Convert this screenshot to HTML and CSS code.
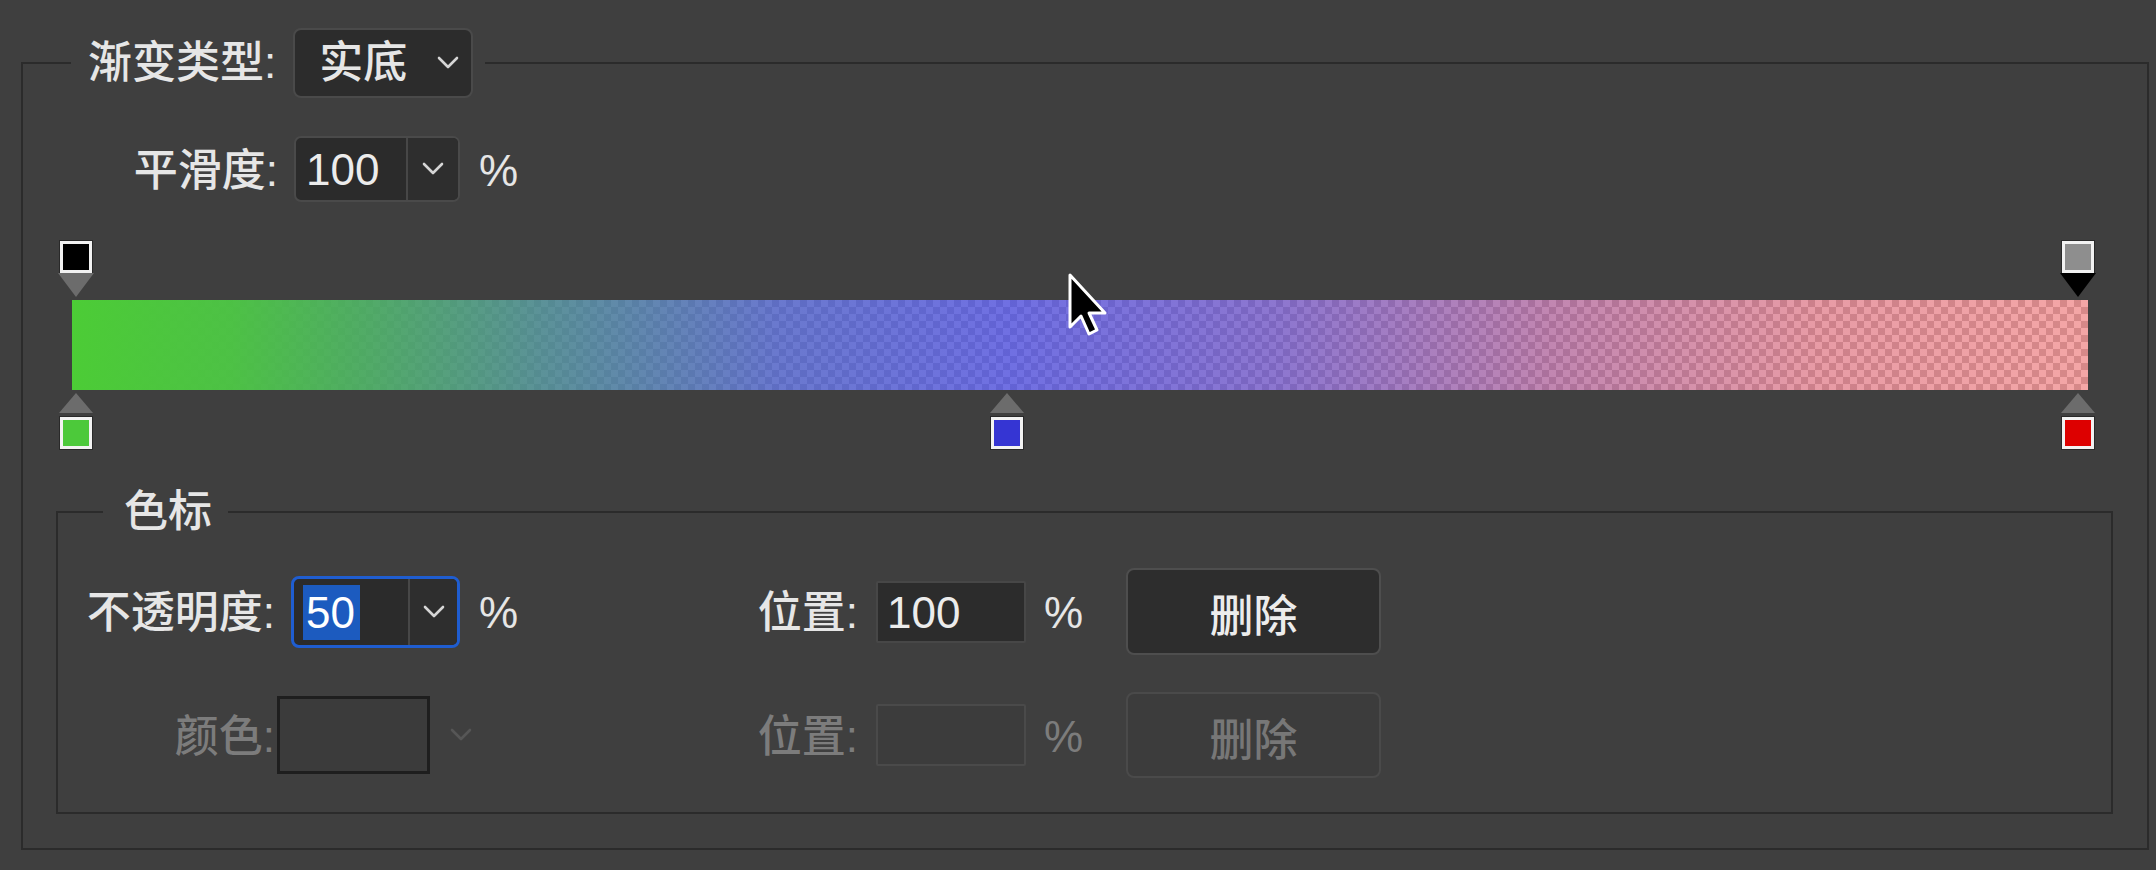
FILE: index.html
```html
<!DOCTYPE html>
<html lang="zh-CN">
<head>
<meta charset="utf-8">
<title>渐变编辑器</title>
<link rel="stylesheet" href="styles.css">
</head>
<body>
<main class="editor">
  <fieldset class="outer">
    <legend class="outer-legend">
      <div class="legend-inner">
        <span class="lbl-inline">渐变类型:</span>
        <span class="select">
          <span class="select-text">实底</span>
          <svg class="chev chev-select" viewBox="0 0 22 14" width="22" height="14"><path d="M2 2 L11 11 L20 2"/></svg>
        </span>
      </div>
    </legend>

    <div class="smooth-row">
      <span class="lbl lbl-smooth">平滑度:</span>
      <span class="combo">
        <span class="combo-text">100</span>
        <span class="combo-btn"><svg class="chev" viewBox="0 0 22 14" width="22" height="14"><path d="M2 2 L11 11 L20 2"/></svg></span>
      </span>
      <span class="pct">%</span>
    </div>

    <div class="grad">
      <div class="track track-top">
        <span class="stop stop-top" style="left:0%"><span class="sw" style="background:#000000"></span><span class="tri-down"></span></span>
        <span class="stop stop-top selected" style="left:100%"><span class="sw" style="background:#8e8e8e"></span><span class="tri-down"></span></span>
      </div>
      <div class="bar"></div>
      <div class="track track-bottom">
        <span class="stop stop-bottom" style="left:0%"><span class="tri-up"></span><span class="sw" style="background:#4cc93a"></span></span>
        <span class="stop stop-bottom" style="left:46.5%"><span class="tri-up"></span><span class="sw" style="background:#3535d3"></span></span>
        <span class="stop stop-bottom" style="left:100%"><span class="tri-up"></span><span class="sw" style="background:#dd0000"></span></span>
      </div>
    </div>

    <fieldset class="inner">
      <legend class="inner-legend">色标</legend>

      <div class="row row1">
        <div class="group-a">
          <span class="lbl lbl-a">不透明度:</span>
          <span class="combo combo-focus">
            <span class="combo-text"><span class="sel">50</span></span>
            <span class="combo-btn"><svg class="chev" viewBox="0 0 22 14" width="22" height="14"><path d="M2 2 L11 11 L20 2"/></svg></span>
          </span>
          <span class="pct">%</span>
        </div>
        <div class="group-b">
          <span class="lbl lbl-b">位置:</span>
          <span class="field">100</span>
          <span class="pct pct-b">%</span>
          <span class="btn">删除</span>
        </div>
      </div>

      <div class="row row2 disabled">
        <div class="group-a">
          <span class="lbl lbl-a">颜色:</span>
          <span class="swatch"></span>
          <svg class="chev chev-dis" viewBox="0 0 22 14" width="22" height="14"><path d="M2 2 L11 11 L20 2"/></svg>
        </div>
        <div class="group-b">
          <span class="lbl lbl-b">位置:</span>
          <span class="field"></span>
          <span class="pct pct-b">%</span>
          <span class="btn">删除</span>
        </div>
      </div>
    </fieldset>
  </fieldset>

  <svg class="cursor" viewBox="0 0 44 68" width="44" height="68"><polygon points="4,4 4,56 15,45 23,63 31,59 23,42 39,42" /></svg>
</main>
</body>
</html>
```

FILE: styles.css
```css
* { box-sizing: border-box; }

html, body {
  margin: 0;
  padding: 0;
}

body {
  background: #3f3f3f;
  width: 2156px;
  height: 870px;
  overflow: hidden;
  font-family: "Liberation Sans", "Noto Sans CJK SC", sans-serif;
  font-size: 44px;
  font-weight: 500;
  color: #e6e6e6;
}

.editor {
  position: relative;
  padding: 28px 0 0 21px;
  height: 870px;
}

fieldset {
  margin: 0;
  min-width: 0;
}

legend {
  line-height: 50px;
}

.outer {
  width: 2128px;
  border: 2px solid #2b2b2b;
  padding: 0 0 34px 0;
}

.outer-legend {
  margin-left: 48px;
  padding: 0 12px 0 17px;
}

.legend-inner {
  display: flex;
  align-items: center;
  height: 70px;
}

.lbl-inline {
  line-height: 50px;
}

.select {
  margin-left: 17px;
  width: 180px;
  height: 70px;
  display: flex;
  align-items: center;
  background: #2c2c2c;
  border: 2px solid #4a4a4a;
  border-radius: 8px;
  padding-left: 24px;
}

.select-text {
  line-height: 50px;
}

.chev {
  display: block;
  fill: none;
  stroke: #d6d6d6;
  stroke-width: 2.6;
  stroke-linecap: round;
  stroke-linejoin: round;
}

.chev-select {
  margin-left: 30px;
}

.smooth-row {
  display: flex;
  align-items: center;
  height: 66px;
  margin-top: 38px;
}

.lbl {
  flex: none;
  text-align: right;
  line-height: 50px;
  padding-top: 3px;
}

.lbl-smooth {
  width: 255px;
  margin-right: 16px;
}

.combo {
  flex: none;
  display: flex;
  width: 166px;
  height: 66px;
  border: 2px solid #4a4a4a;
  border-radius: 7px;
  background: #2b2b2b;
  overflow: hidden;
}

.combo-text {
  flex: 1;
  display: flex;
  align-items: center;
  padding-left: 10px;
  padding-top: 2px;
  line-height: 50px;
  color: #ececec;
}

.combo-btn {
  width: 52px;
  border-left: 2px solid #474747;
  background: #2e2e2e;
  display: flex;
  align-items: center;
  justify-content: center;
}

.pct {
  flex: none;
  margin-left: 19px;
  width: 37px;
  line-height: 50px;
  padding-top: 3px;
}

/* gradient editor */
.grad {
  margin-top: 39px;
}

.track {
  position: relative;
  margin: 0 69px 0 53px;
}

.track-top {
  height: 59px;
}

.track-bottom {
  height: 60px;
}

.stop {
  position: absolute;
  top: 0;
  width: 36px;
  transform: translateX(-50%);
  display: flex;
  flex-direction: column;
  align-items: center;
}

.sw {
  display: block;
  width: 32px;
  height: 32px;
  border: 3px solid #f2f2f2;
  box-shadow: 0 0 0 1px rgba(0, 0, 0, 0.35);
}

.tri-down {
  display: block;
  width: 0;
  height: 0;
  border-left: 18px solid transparent;
  border-right: 18px solid transparent;
  border-top: 24px solid #6c6c6c;
}

.selected .tri-down {
  border-top-color: #000000;
}

.tri-up {
  display: block;
  width: 0;
  height: 0;
  margin-top: 3px;
  margin-bottom: 4px;
  border-left: 17px solid transparent;
  border-right: 17px solid transparent;
  border-bottom: 20px solid #6c6c6c;
}

.bar {
  margin: 0 59px 0 49px;
  height: 90px;
  background:
    linear-gradient(to right,
      rgba(76, 204, 54, 1) 0%,
      rgba(74, 192, 66, 0.98) 8%,
      rgba(70, 168, 90, 0.94) 14%,
      rgba(63, 127, 134, 0.85) 23.25%,
      rgba(55, 75, 189, 0.747) 34.9%,
      rgba(51, 51, 214, 0.70) 46.5%,
      rgba(78, 43, 181, 0.645) 59.9%,
      rgba(137, 25, 107, 0.525) 73.25%,
      rgba(197, 8, 33, 0.405) 86.6%,
      rgba(224, 0, 0, 0.35) 100%),
    repeating-conic-gradient(#ffffff 0 25%, #d2d2d2 0 50%) 0 0 / 14px 14px;
}

/* color stops group */
.inner {
  margin: 37px 34px 0 33px;
  border: 2px solid #2b2b2b;
  padding: 31px 0 34px 0;
}

.inner-legend {
  margin-left: 45px;
  padding: 0 16px 0 21px;
}

.row {
  display: flex;
  align-items: center;
}

.row1 {
  height: 87px;
}

.row2 {
  height: 86px;
  margin-top: 37px;
}

.group-a {
  flex: none;
  width: 458px;
  display: flex;
  align-items: center;
}

.group-b {
  display: flex;
  align-items: center;
  height: 100%;
}

.lbl-a {
  width: 217px;
}

.lbl-b {
  width: 342px;
  margin-right: 18px;
}

.combo-focus {
  margin-left: 16px;
  width: 169px;
  height: 72px;
  border: 3px solid #1f5dd0;
  border-radius: 8px;
}

.combo-focus .combo-text {
  padding-left: 9px;
}

.combo-focus .combo-btn {
  width: 49px;
}

.sel {
  display: inline-block;
  background: #1c5bbf;
  color: #ffffff;
  line-height: 55px;
  padding: 0 5px 0 3px;
}

.field {
  flex: none;
  width: 150px;
  height: 62px;
  background: #2c2c2c;
  border: 2px solid #474747;
  border-radius: 2px;
  padding-left: 9px;
  padding-top: 2px;
  line-height: 56px;
  color: #ececec;
}

.pct-b {
  margin-left: 18px;
  width: 82px;
}

.btn {
  flex: none;
  width: 255px;
  height: 100%;
  display: flex;
  align-items: center;
  justify-content: center;
  padding-top: 3px;
  background: #2d2d2d;
  border: 2px solid #4e4e4e;
  border-radius: 8px;
  color: #ececec;
}

.swatch {
  flex: none;
  margin-left: 2px;
  width: 153px;
  height: 78px;
  background: #3b3b3b;
  border: 3px solid #1e1e1e;
}

.chev-dis {
  margin-left: 20px;
  stroke: #565656;
}

.disabled {
  color: #7c7c7c;
}

.disabled .field {
  background: #3c3c3c;
  border-color: #4a4a4a;
}

.disabled .btn {
  background: #3c3c3c;
  border-color: #4a4a4a;
  color: #777777;
}

/* mouse pointer over the canvas */
.cursor {
  position: absolute;
  left: 1066px;
  top: 271px;
  fill: #000000;
  stroke: #ffffff;
  stroke-width: 3;
  stroke-linejoin: round;
}
```
